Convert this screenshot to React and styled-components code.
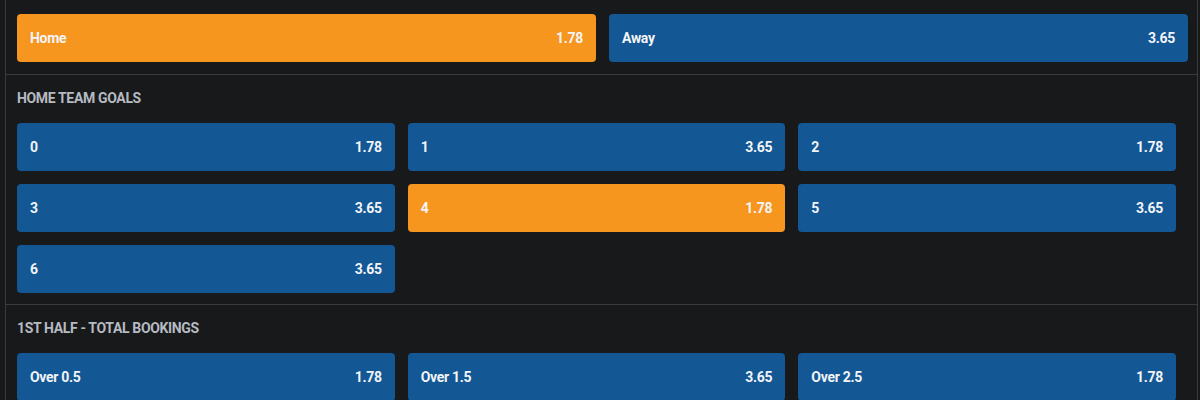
import React from "react";
import styled, { createGlobalStyle } from "styled-components";

const GlobalStyle = createGlobalStyle`
  html, body {
    margin: 0;
    padding: 0;
    background: #18191b;
    font-family: Roboto, "Noto Sans", sans-serif;
  }
`;

const markets = [
  {
    title: "HOME TEAM GOALS",
    options: [
      { label: "0", odds: "1.78" },
      { label: "1", odds: "3.65" },
      { label: "2", odds: "1.78" },
      { label: "3", odds: "3.65" },
      { label: "4", odds: "1.78", selected: true },
      { label: "5", odds: "3.65" },
      { label: "6", odds: "3.65" },
    ],
  },
  {
    title: "1ST HALF - TOTAL BOOKINGS",
    options: [
      { label: "Over 0.5", odds: "1.78" },
      { label: "Over 1.5", odds: "3.65" },
      { label: "Over 2.5", odds: "1.78" },
    ],
  },
];

export default function App() {
  return (
    <>
      <GlobalStyle />
      <Panel>
        <MatchRow>
          <OddButton selected>
            <span>Home</span>
            <span>1.78</span>
          </OddButton>
          <OddButton>
            <span>Away</span>
            <span>3.65</span>
          </OddButton>
        </MatchRow>
        {markets.map((market) => (
          <Market key={market.title}>
            <MarketTitle>{market.title}</MarketTitle>
            <OptionGrid>
              {market.options.map((opt) => (
                <OddButton key={opt.label} selected={opt.selected}>
                  <span>{opt.label}</span>
                  <span>{opt.odds}</span>
                </OddButton>
              ))}
            </OptionGrid>
          </Market>
        ))}
      </Panel>
    </>
  );
}

const Panel = styled.div`
  margin: 0 2px 0 5px;
  height: 400px;
  overflow: hidden;
  border-left: 1px solid #3a3b40;
  border-right: 1px solid #3a3b40;
  background: #18191b;
`;

const MatchRow = styled.div`
  display: grid;
  grid-template-columns: 1fr 1fr;
  gap: 13px;
  padding: 14px 9px 12px 11px;
  border-bottom: 1px solid #3a3b40;
`;

const Market = styled.section`
  padding: 15px 21px 11px 11px;
  border-bottom: 1px solid #3a3b40;
`;

const MarketTitle = styled.div`
  height: 17px;
  line-height: 17px;
  margin-bottom: 16px;
  color: #b6bac1;
  font-size: 14px;
  font-weight: 700;
  letter-spacing: -0.35px;
`;

const OptionGrid = styled.div`
  display: grid;
  grid-template-columns: repeat(3, 1fr);
  gap: 13px;
`;

const OddButton = styled.div`
  display: flex;
  align-items: center;
  justify-content: space-between;
  height: 48px;
  padding: 0 13px 0 13px;
  box-sizing: border-box;
  border-radius: 4px;
  background: ${(p) => (p.selected ? "#f7961f" : "#135795")};
  color: #f2f4f7;
  font-size: 14px;
  font-weight: 700;
  letter-spacing: -0.3px;
  cursor: pointer;
`;
